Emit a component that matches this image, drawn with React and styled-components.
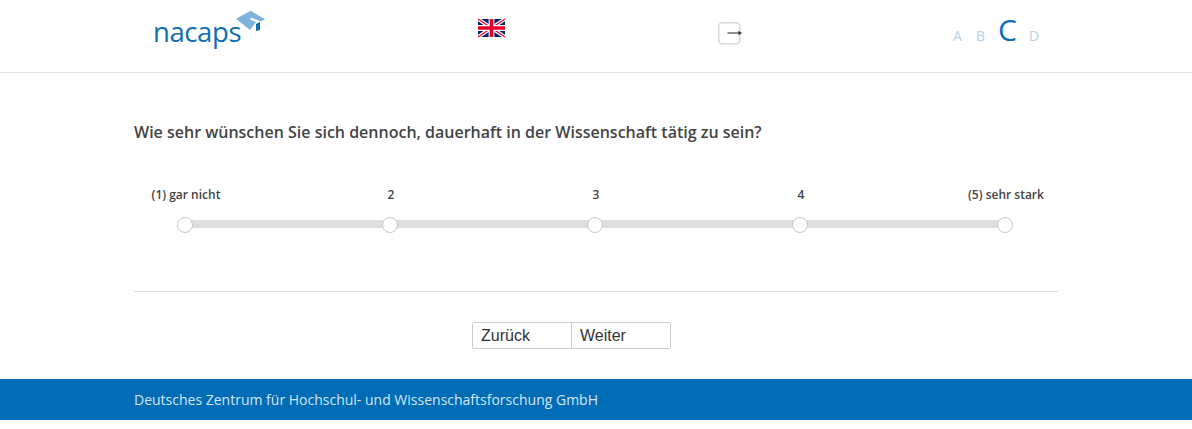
import React from "react";
import styled, { createGlobalStyle } from "styled-components";

const GlobalStyle = createGlobalStyle`
  html, body {
    margin: 0;
    padding: 0;
    background: #fff;
    font-family: "Open Sans", sans-serif;
    color: #444;
  }
`;

const Header = styled.header`
  height: 72px;
  border-bottom: 1px solid #dedede;
  display: grid;
  grid-template-columns: 478px 240px 235px 1fr;
`;

const LogoCell = styled.div`
  display: flex;
  align-items: flex-start;
  padding: 10px 0 0 153px;
`;

const Logo = styled.div`
  display: flex;
  align-items: flex-start;
  color: #0f6eb4;
`;

const LogoText = styled.span`
  font-size: 27.5px;
  line-height: 28px;
  letter-spacing: -0.4px;
  margin-top: 8px;
`;

const Cap = styled.svg`
  width: 31px;
  height: 27px;
  margin-left: -6px;
`;

const FlagCell = styled.div`
  padding-top: 18px;
`;

const LeaveCell = styled.div`
  padding-top: 22px;
`;

const Versions = styled.div`
  display: flex;
  align-items: baseline;
  height: 45px;
  padding-top: 7px;
`;

const Version = styled.span`
  color: ${(p) => (p.$active ? "#0a6ebd" : "#b5d3ec")};
  font-size: ${(p) => (p.$active ? "30px" : "14px")};
  line-height: 45px;
  width: ${(p) => p.$w}px;
`;

const Main = styled.main`
  width: 924px;
  margin-left: 134px;
`;

const Question = styled.h2`
  margin: 0;
  padding-top: 48px;
  font-size: 16px;
  line-height: 22px;
  font-weight: 600;
  color: #444;
`;

const Scale = styled.div`
  margin: 43px 53px 0 51px;
  display: flex;
  justify-content: space-between;
  background: linear-gradient(#dedede, #dedede) no-repeat 0 34px / 100% 8px;
  padding-bottom: 58px;
`;

const Point = styled.label`
  width: 0;
  display: flex;
  flex-direction: column;
  align-items: center;
  gap: 14px;
`;

const PointLabel = styled.span`
  padding-left: 2px;
  font-size: 12px;
  line-height: 17px;
  font-weight: 600;
  color: #444;
  white-space: nowrap;
`;

const Knob = styled.span`
  flex: none;
  width: 14px;
  height: 14px;
  border: 1px solid #c8c8c8;
  border-radius: 50%;
  background: #fff;
`;

const Divider = styled.hr`
  margin: 0;
  border: 0;
  border-top: 1px solid #dedede;
`;

const Nav = styled.nav`
  display: flex;
  padding: 30px 0 30px 338px;
`;

const NavGroup = styled.div`
  display: grid;
  grid-template-columns: 98px 99px;
  border: 1px solid #ccc;
  border-radius: 2px;
`;

const NavButton = styled.button`
  height: 25px;
  padding: 0 0 0 8px;
  border: 0;
  background: #fff;
  color: #333;
  font-family: "Liberation Sans", Arial, sans-serif;
  font-size: 16px;
  text-align: left;

  & + & {
    border-left: 1px solid #ccc;
  }
`;

const Footer = styled.footer`
  height: 41px;
  background: #006cb5;
  color: #d5e6f3;
  font-size: 14px;
  line-height: 41px;
  padding-left: 134px;
`;

const Flag = () => (
  <svg width="27" height="20" viewBox="0 0 60 40" style={{ display: "block" }}>
    <rect width="60" height="40" fill="#012169" />
    <path d="M0 0 60 40M60 0 0 40" stroke="#fff" strokeWidth="8" />
    <path d="M0 0 60 40M60 0 0 40" stroke="#e4002b" strokeWidth="2.5" />
    <path d="M30 0V40M0 20H60" stroke="#fff" strokeWidth="13" />
    <path d="M30 0V40M0 20H60" stroke="#e4002b" strokeWidth="8" />
  </svg>
);

const LeaveIcon = () => (
  <svg width="25" height="23" viewBox="0 0 25 23" style={{ display: "block" }}>
    <rect x="0.75" y="0.75" width="21" height="21" rx="3.5" fill="#fff" stroke="#d8d8d8" strokeWidth="1.5" />
    <path d="M9.5 11H22" stroke="#444" strokeWidth="1.2" />
    <path d="M20.5 8.8 24 11 20.5 13.2Z" fill="#333" />
  </svg>
);

const points = ["(1) gar nicht", "2", "3", "4", "(5) sehr stark"];

const App = () => {
  return (
    <>
      <GlobalStyle />
      <Header>
        <LogoCell>
          <Logo>
            <LogoText>nacaps</LogoText>
            <Cap viewBox="0 0 31 27">
              <path d="M1 8.7 15.7.7 30 9.3 26 11.5 16 7.5 15 9.5 21 12 15 20Z" fill="#7fb2da" />
              <path d="M21 14 25 12V20L21 21Z" fill="#0f6eb4" />
            </Cap>
          </Logo>
        </LogoCell>
        <FlagCell>
          <Flag />
        </FlagCell>
        <LeaveCell>
          <LeaveIcon />
        </LeaveCell>
        <Versions>
          <Version $w={23}>A</Version>
          <Version $w={22}>B</Version>
          <Version $w={31} $active>C</Version>
          <Version $w={20}>D</Version>
        </Versions>
      </Header>
      <Main>
        <Question>Wie sehr wünschen Sie sich dennoch, dauerhaft in der Wissenschaft tätig zu sein?</Question>
        <Scale>
          {points.map((text) => (
            <Point key={text}>
              <PointLabel>{text}</PointLabel>
              <Knob />
            </Point>
          ))}
        </Scale>
        <Divider />
        <Nav>
          <NavGroup>
            <NavButton>Zurück</NavButton>
            <NavButton>Weiter</NavButton>
          </NavGroup>
        </Nav>
      </Main>
      <Footer>Deutsches Zentrum für Hochschul- und Wissenschaftsforschung GmbH</Footer>
    </>
  );
};

export default App;
